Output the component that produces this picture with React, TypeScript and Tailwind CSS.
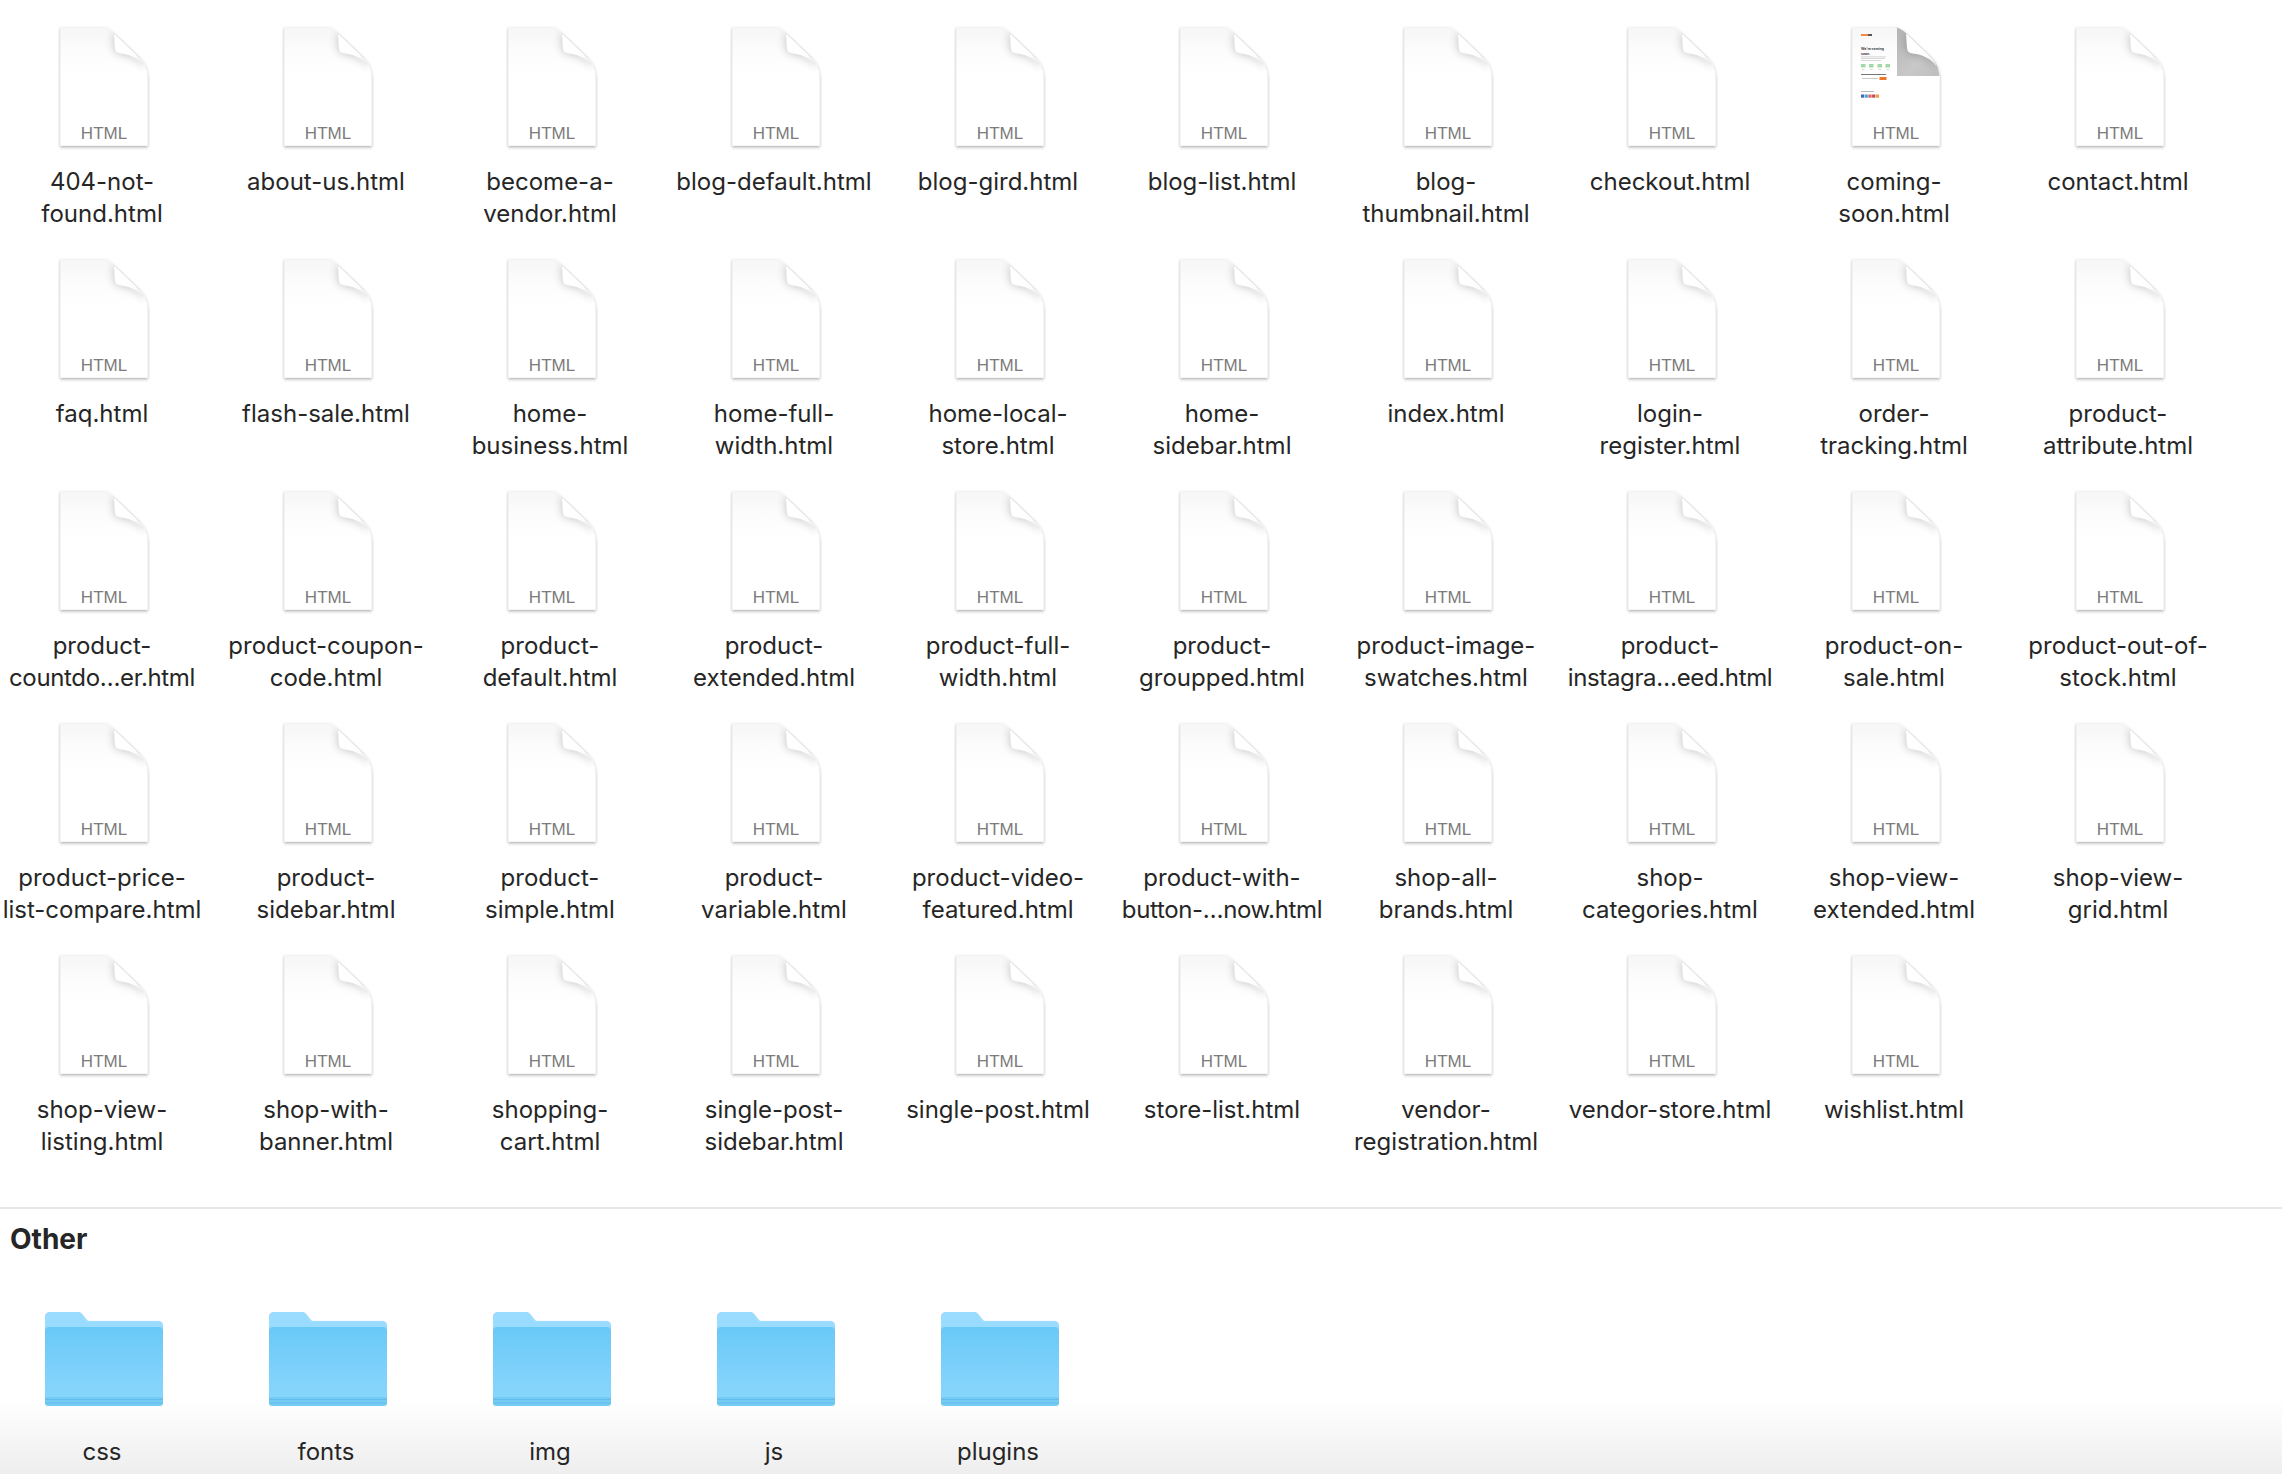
const files: string[][] = [
  ["404-not-", "found.html"],
  ["about-us.html"],
  ["become-a-", "vendor.html"],
  ["blog-default.html"],
  ["blog-gird.html"],
  ["blog-list.html"],
  ["blog-", "thumbnail.html"],
  ["checkout.html"],
  ["coming-", "soon.html"],
  ["contact.html"],
  ["faq.html"],
  ["flash-sale.html"],
  ["home-", "business.html"],
  ["home-full-", "width.html"],
  ["home-local-", "store.html"],
  ["home-", "sidebar.html"],
  ["index.html"],
  ["login-", "register.html"],
  ["order-", "tracking.html"],
  ["product-", "attribute.html"],
  ["product-", "countdo…er.html"],
  ["product-coupon-", "code.html"],
  ["product-", "default.html"],
  ["product-", "extended.html"],
  ["product-full-", "width.html"],
  ["product-", "groupped.html"],
  ["product-image-", "swatches.html"],
  ["product-", "instagra…eed.html"],
  ["product-on-", "sale.html"],
  ["product-out-of-", "stock.html"],
  ["product-price-", "list-compare.html"],
  ["product-", "sidebar.html"],
  ["product-", "simple.html"],
  ["product-", "variable.html"],
  ["product-video-", "featured.html"],
  ["product-with-", "button-…now.html"],
  ["shop-all-", "brands.html"],
  ["shop-", "categories.html"],
  ["shop-view-", "extended.html"],
  ["shop-view-", "grid.html"],
  ["shop-view-", "listing.html"],
  ["shop-with-", "banner.html"],
  ["shopping-", "cart.html"],
  ["single-post-", "sidebar.html"],
  ["single-post.html"],
  ["store-list.html"],
  ["vendor-", "registration.html"],
  ["vendor-store.html"],
  ["wishlist.html"],
];

const folders = ["css", "fonts", "img", "js", "plugins"];

const PAGE = "M0.5 0.5H42C47 0.5 50 2.5 54 6L80 31C85.5 36.5 87.5 44 87.5 52V118.5H0.5Z";
const CURL = "M54 6C54.5 12 54.5 17 55 21C55.5 25 57 26 61 26.5C70 27.5 78 31 84.5 39C83.5 35.5 82 33 80 31Z";

function SharedDefs() {
  return (
    <svg width="0" height="0" className="absolute">
      <defs>
        <clipPath id="pageClip">
          <path d={PAGE} />
        </clipPath>
        <linearGradient id="pageTop" x1="0" y1="0" x2="0" y2="1">
          <stop offset="0" stopColor="#f6f6f6" />
          <stop offset="0.2" stopColor="#fcfcfc" />
          <stop offset="0.4" stopColor="#ffffff" />
        </linearGradient>
        <linearGradient id="pageCurl" x1="0.2" y1="0" x2="0.75" y2="1">
          <stop offset="0" stopColor="#ffffff" />
          <stop offset="0.7" stopColor="#fefefe" />
          <stop offset="1" stopColor="#ececec" />
        </linearGradient>
        <linearGradient id="previewGrey" x1="0" y1="0" x2="1" y2="1">
          <stop offset="0" stopColor="#b4b4b4" />
          <stop offset="0.6" stopColor="#c8c8c8" />
          <stop offset="1" stopColor="#bdbdbd" />
        </linearGradient>
        <linearGradient id="folderFront" x1="0" y1="0" x2="0" y2="1">
          <stop offset="0" stopColor="#69c9f7" />
          <stop offset="0.75" stopColor="#84d4fb" />
          <stop offset="1" stopColor="#88d6fb" />
        </linearGradient>
        <filter id="iconShadow" x="-10%" y="-10%" width="120%" height="120%">
          <feDropShadow dx="0" dy="1.5" stdDeviation="1.5" floodColor="#000000" floodOpacity="0.32" />
        </filter>
        <filter id="folderShadow" x="-10%" y="-10%" width="120%" height="120%">
          <feDropShadow dx="0" dy="1" stdDeviation="1" floodColor="#000000" floodOpacity="0.22" />
        </filter>
        <filter id="curlBlur" filterUnits="userSpaceOnUse" x="20" y="-20" width="90" height="90">
          <feGaussianBlur stdDeviation="4" />
        </filter>
      </defs>
    </svg>
  );
}

function ComingSoonPreview() {
  return (
    <g>
      <path d="M45 0.5V49H87.5V52C87.5 44 85.5 36.5 80 31L54 6C50 2.5 47 0.5 42 0.5Z" fill="url(#previewGrey)" />
      <rect x="9" y="7" width="7" height="2" fill="#f58a3c" />
      <rect x="16" y="7" width="4" height="2" fill="#555555" />
      <text x="9" y="23" fontFamily="Inter, sans-serif" fontSize="3.4" fontWeight="700" fill="#444444">We're coming</text>
      <text x="9" y="27.5" fontFamily="Inter, sans-serif" fontSize="3.4" fontWeight="700" fill="#444444">soon.</text>
      <rect x="9" y="29.5" width="25" height="0.8" fill="#c9c9c9" />
      <rect x="9" y="31.2" width="24" height="0.8" fill="#d0d0d0" />
      <rect x="9" y="33" width="20" height="0.8" fill="#d0d0d0" />
      {[9, 17, 25.5, 33.5].map((x) => (
        <g key={x}>
          <rect x={x} y="37" width="4.5" height="3.5" fill="#a5d8a8" />
          <rect x={x + 1} y="42" width="2.5" height="0.7" fill="#c4c4c4" />
        </g>
      ))}
      <rect x="9" y="47" width="25" height="1" fill="#777777" />
      <rect x="10" y="51" width="16" height="0.8" fill="#bdbdbd" />
      <rect x="27.5" y="50" width="7" height="3" fill="#f0762c" />
      <rect x="9" y="64" width="13" height="0.8" fill="#aaaaaa" />
      {["#4a67ad", "#4aa3e8", "#e4605a", "#b5524e", "#f09a4f"].map((c, i) => (
        <rect key={c} x={9 + i * 3.7} y="67.5" width="3.2" height="3.2" fill={c} />
      ))}
    </g>
  );
}

function FileIcon({ preview }: { preview?: boolean }) {
  return (
    <div className="relative h-[119px] w-[88px]">
      <svg width="88" height="119" viewBox="0 0 88 119" className="overflow-visible">
        <path d={PAGE} fill="#ffffff" stroke="#e4e4e4" strokeWidth="0.5" filter="url(#iconShadow)" />
        <path d={PAGE} fill="url(#pageTop)" />
        {preview && <ComingSoonPreview />}
        <g clipPath="url(#pageClip)">
          <path d={CURL} fill="#000000" stroke="#000000" strokeWidth="2" opacity="0.2" filter="url(#curlBlur)" />
        </g>
        <path d={CURL} fill="url(#pageCurl)" />
        <path d="M54 6L80 31" stroke="#d4d4d4" strokeWidth="0.6" fill="none" />
      </svg>
      <span className="absolute inset-x-0 bottom-[1.5px] text-center font-['Liberation_Sans',sans-serif] text-[17px] leading-[22px] text-[#7b7b7b]">
        HTML
      </span>
    </div>
  );
}

function FolderIcon() {
  return (
    <svg width="118" height="94" viewBox="0 0 118 94">
      <g filter="url(#folderShadow)">
        <path
          d="M0 5C0 2 2 0 5 0H33C35 0 36 0.5 37.5 2.5L41 7C42 8.5 43 9 45 9H113C116 9 118 11 118 14V89C118 92 116 94 113 94H5C2 94 0 92 0 89Z"
          fill="#99dcff"
        />
        <path
          d="M0 19C0 16.5 2 15 4 15H114C116 15 118 16.5 118 19V90C118 92.5 116 94 114 94H4C2 94 0 92.5 0 90Z"
          fill="url(#folderFront)"
        />
        <path d="M0 84H118V90C118 92.5 116 94 114 94H4C2 94 0 92.5 0 90Z" fill="#74cbf4" />
        <rect x="0" y="84" width="118" height="1" fill="#86d5fa" />
        <rect x="0" y="87" width="118" height="1" fill="#62bdea" />
        <rect x="0" y="90.5" width="118" height="1" fill="#62bdea" />
      </g>
    </svg>
  );
}

function FileTile({ lines }: { lines: string[] }) {
  return (
    <div className="flex h-[232px] flex-col items-center">
      <div className="ml-1">
        <FileIcon preview={lines[0] === "coming-"} />
      </div>
      <div className="mt-[20px] text-center text-[24px] leading-[31.5px] whitespace-nowrap text-[#262626]">
        {lines.map((l) => (
          <div key={l} className={l.includes("…") ? "tracking-[-0.35px]" : ""}>
            {l}
          </div>
        ))}
      </div>
    </div>
  );
}

export default function App() {
  return (
    <div className="flex h-[1474px] flex-col overflow-hidden bg-white font-['Inter',sans-serif]">
      <SharedDefs />
      <div className="grid h-[1207px] grid-cols-[repeat(10,204px)] content-start gap-x-[20px] pt-[27px]">
        {files.map((f) => (
          <FileTile key={f.join("")} lines={f} />
        ))}
      </div>
      <div className="flex-1 border-t-2 border-[#e6e6e6] bg-[linear-gradient(to_bottom,#ffffff_190px,#eeeeee_100%)]">
        <h2 className="pt-[14px] pl-[10px] text-[28px] leading-[32px] font-bold text-[#262626]">Other</h2>
        <div className="mt-[57px] grid grid-cols-[repeat(10,204px)] gap-x-[20px]">
          {folders.map((name) => (
            <div key={name} className="flex flex-col items-center">
              <div className="ml-1">
                <FolderIcon />
              </div>
              <span className="mt-[30px] text-[24px] leading-[32px] text-[#262626]">{name}</span>
            </div>
          ))}
        </div>
      </div>
    </div>
  );
}
